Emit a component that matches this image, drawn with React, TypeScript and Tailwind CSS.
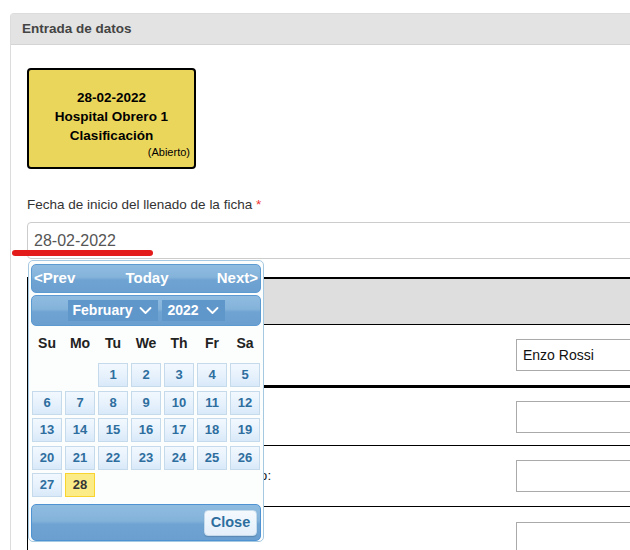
import React from "react";

const barBg =
  "bg-[linear-gradient(180deg,#8fbbe0_0%,#84b3da_45%,#6fa3d2_55%,#6a9fd0_100%)]";
const cellBg = "bg-[linear-gradient(180deg,#f2f8fe_0%,#e6f1fc_55%,#d9e9f9_100%)]";

function Chevron() {
  return (
    <svg width="13" height="9" viewBox="0 0 13 9" className="ml-[7px]">
      <polyline
        points="1.5,2 6.5,7 11.5,2"
        fill="none"
        stroke="white"
        strokeWidth="1.8"
        strokeLinecap="round"
        strokeLinejoin="round"
      />
    </svg>
  );
}

function DatePicker() {
  const days = ["Su", "Mo", "Tu", "We", "Th", "Fr", "Sa"];
  const cells: (number | null)[] = [null, null];
  for (let i = 1; i <= 28; i++) cells.push(i);
  return (
    <div className="absolute left-[28px] top-[260px] w-[236px] h-[282px] rounded-[5px] border border-[#a6c9e2] bg-[#fcfdfd] p-[2px] font-['Liberation_Sans',Arial,sans-serif]">
      <div
        className={`h-[29px] mt-[1px] rounded-[5px] border border-[#5c9ad2] ${barBg} flex items-center justify-between px-[2px] text-[15px] font-bold text-white`}
      >
        <span>&lt;Prev</span>
        <span className="ml-[2px]">Today</span>
        <span>Next&gt;</span>
      </div>
      <div
        className={`h-[31px] mt-[2px] rounded-[5px] border border-[#5c9ad2] ${barBg} flex items-center justify-center gap-[4px] text-[14px] font-bold text-white`}
      >
        <div className="h-[21px] w-[90px] bg-[#5f97cb] flex items-center justify-center">
          February
          <Chevron />
        </div>
        <div className="h-[21px] w-[63px] bg-[#5f97cb] flex items-center justify-center">
          2022
          <Chevron />
        </div>
      </div>
      <div className="grid grid-cols-7 gap-x-[3px] px-[1px] h-[35px] items-center text-[14px] font-bold text-[#222]">
        {days.map((d) => (
          <div key={d} className="text-center">
            {d}
          </div>
        ))}
      </div>
      <div className="grid grid-cols-7 gap-x-[3px] gap-y-[3.5px] px-[1px] mt-[2px]">
        {cells.map((c, i) =>
          c === null ? (
            <div key={i} className="h-[24px]" />
          ) : c === 28 ? (
            <div
              key={i}
              className="h-[24px] border border-[#fad42e] bg-[#fbec88] text-[#363636] text-[13px] font-bold flex items-center justify-center"
            >
              {c}
            </div>
          ) : (
            <div
              key={i}
              className={`h-[24px] border border-[#c5dbec] ${cellBg} text-[#2e6e9e] text-[13px] font-bold flex items-center justify-center`}
            >
              {c}
            </div>
          )
        )}
      </div>
      <div
        className={`h-[37px] mt-[7px] rounded-[5px] border border-[#4f93d3] ${barBg} flex items-center justify-end pr-[3px]`}
      >
        <div className="h-[26px] w-[53px] rounded-[4px] border border-[#c5dbec] bg-[linear-gradient(180deg,#f4f9fe_0%,#e4effa_100%)] shadow-[0_1px_1px_rgba(0,0,0,0.15)] flex items-center justify-center text-[14.5px] font-bold text-[#2e6e9e]">
          Close
        </div>
      </div>
    </div>
  );
}

function Field({ value }: { value?: string }) {
  return (
    <div className="h-[32px] w-[200px] border border-[#aaa] bg-white flex items-center pl-[6px] text-[14px] text-[#111]">
      {value}
    </div>
  );
}

export default function App() {
  return (
    <div className="relative w-[630px] h-[550px] overflow-hidden bg-white font-['Liberation_Sans',Arial,sans-serif]">
      <div className="ml-[10px] mt-[13px] w-[700px] border-l border-t border-[#dcdcdc] rounded-tl-[4px]">
        <div className="h-[31px] bg-[#e3e3e3] border-b border-[#d4d4d4] flex items-center pl-[11px] text-[13.5px] font-bold text-[#444]">
          Entrada de datos
        </div>
        <div className="pl-[16px] pt-[23px] pb-[40px]">
          <div className="w-[169px] h-[101px] rounded-[4px] border-2 border-black bg-[#ebd65c] flex flex-col items-center pt-[18px] text-[13.5px] font-bold text-black leading-[19px]">
            <div>28-02-2022</div>
            <div>Hospital Obrero 1</div>
            <div>Clasificación</div>
            <div className="self-end pr-[4px] text-[11px] font-normal leading-[14px] mt-[0px]">
              (Abierto)
            </div>
          </div>
          <div className="mt-[26px] h-[20px] leading-[20px] text-[13.5px] text-[#333]">
            Fecha de inicio del llenado de la ficha <span className="text-[#e33]">*</span>
          </div>
          <div className="mt-[7px] h-[37px] w-[700px] rounded-[4px] border border-[#ccc] flex items-center pl-[6px] text-[16px] text-[#555]">
            28-02-2022
          </div>
          <div className="mt-[18px] w-[700px] border-l border-black">
            <div className="h-[48px] border-t-2 border-b border-black bg-[#dedede]" />
            <div className="h-[63px] border-b-[3px] border-black flex items-center">
              <div className="w-[488px] pl-[6px] text-[13.5px] text-[#222]">Nombre del responsable:</div>
              <Field value="Enzo Rossi" />
            </div>
            <div className="h-[58px] border-b border-black flex items-center">
              <div className="w-[488px] pl-[6px] text-[13.5px] text-[#222]">Cargo del responsable:</div>
              <Field />
            </div>
            <div className="h-[61px] border-b border-black flex items-center">
              <div className="w-[488px] pl-[6px] text-[13.5px] text-[#222]">
                Nombre del establecimiento de destino:
              </div>
              <Field />
            </div>
            <div className="h-[61px] flex items-center">
              <div className="w-[488px] pl-[6px] text-[13.5px] text-[#222]">Observaciones:</div>
              <Field />
            </div>
          </div>
        </div>
      </div>
      <div className="absolute left-[12px] top-[250px] w-[141px] h-[6px] rounded-full bg-[#e31b1b]" />
      <DatePicker />
    </div>
  );
}
